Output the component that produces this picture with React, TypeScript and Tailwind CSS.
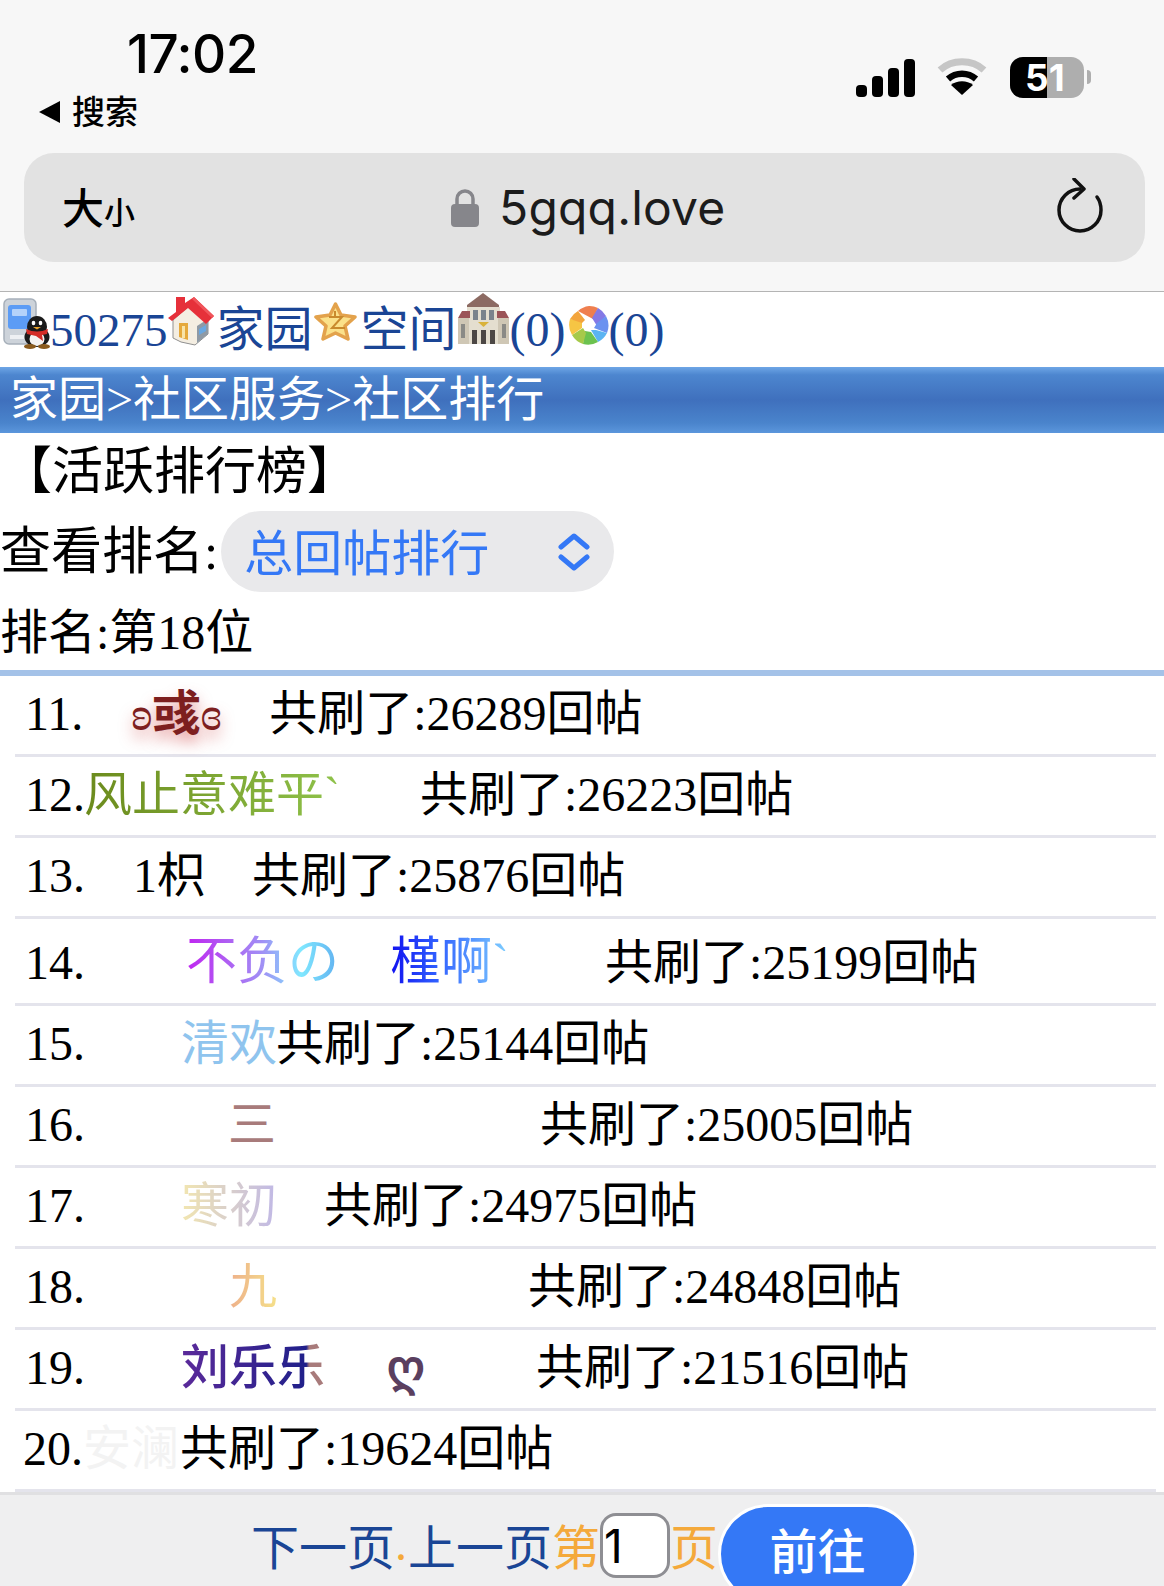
const serif = "font-['Liberation_Serif','Noto_Sans_CJK_SC',serif]";

// 手绘小图标
function PhoneQQ() {
  return (
    <svg className="inline align-baseline -mb-[3px] blur-[0.5px]" width="48" height="51" viewBox="0 0 48 51">
      <rect x="2" y="1" width="32" height="45" rx="5" fill="#cdd3da" stroke="#a7b0ba" strokeWidth="1.500" />
      <rect x="6" y="7" width="23" height="24" rx="3" fill="#5c9cf5" />
      <rect x="10" y="11" width="15" height="7" rx="1" fill="#b4d2fa" />
      <rect x="8" y="37" width="14" height="4" fill="#eef0f3" />
      <ellipse cx="35" cy="29" rx="10" ry="11" fill="#1b1b1b" />
      <ellipse cx="35" cy="39" rx="12.500" ry="10" fill="#1b1b1b" />
      <ellipse cx="35" cy="41" rx="7.500" ry="7" fill="#f4f2f0" />
      <path d="M24 31q11 5 22 0l-1 5-5 1 1 6-7-5-9-2z" fill="#d42c26" />
      <ellipse cx="31.500" cy="25" rx="1.800" ry="2.200" fill="#fff" />
      <ellipse cx="38.500" cy="25" rx="1.800" ry="2.200" fill="#fff" />
      <path d="M31 29h8l-4 2.500z" fill="#e8a32c" />
      <ellipse cx="28" cy="48.500" rx="6" ry="2.500" fill="#8a5a1c" />
      <ellipse cx="42" cy="48.500" rx="6" ry="2.500" fill="#8a5a1c" />
    </svg>
  );
}

function House() {
  return (
    <svg className="inline align-baseline blur-[0.5px]" width="46" height="50" viewBox="0 0 46 50">
      <path d="M5 24 22 9l18 15v14l-13 11-14-3-8-4z" fill="#f4eee2" stroke="#8f8f8f" />
      <path d="M29 30l11-7v15l-11 9z" fill="#8f9aa5" />
      <path d="M31 33l7-4v6l-7 4z" fill="#69a7e0" />
      <path d="M11 27h9v17l-9-3z" fill="#e5a93c" />
      <path d="M14 30h3v12h-3z" fill="#f8e4a8" />
      <path d="M0 22 8 16V1h9v6l9-6 20 19-8 8-18-16L4 25z" fill="#e6303a" />
      <path d="M26 1l20 19-2 2-20-19z" fill="#f0555b" />
    </svg>
  );
}

function Star() {
  return (
    <svg className="inline align-baseline mb-[5px] blur-[0.5px]" width="43" height="39" viewBox="0 0 43 39">
      <path d="M21.500 2 27 13l14 2-10 9 3 13-12.500-6L9 37l3-13L2 15l14-2z" fill="#fbe18a" stroke="#e3a24c" strokeWidth="3.500" strokeLinejoin="round" />
      <path d="M15 15h13l-10 11h13M21 9v6" fill="none" stroke="#c98a2d" strokeWidth="2" />
    </svg>
  );
}

function Building() {
  return (
    <svg className="inline align-baseline blur-[0.5px]" width="53" height="53" viewBox="0 0 53 53">
      <path d="M26 0 42 12v3H10v-3z" fill="#8c6a62" />
      <rect x="10" y="14" width="33" height="37" fill="#e4decf" />
      <path d="M1 25 5 18h8v7zM52 25l-4-7h-8v7z" fill="#9b5458" />
      <rect x="1" y="25" width="11" height="26" fill="#cfc7b5" />
      <rect x="41" y="25" width="11" height="26" fill="#cfc7b5" />
      <rect x="16" y="17" width="5" height="10" fill="#7a838c" />
      <rect x="24" y="17" width="5" height="10" fill="#7a838c" />
      <rect x="32" y="17" width="5" height="10" fill="#7a838c" />
      <rect x="15" y="37" width="5" height="14" fill="#4c4745" />
      <rect x="24" y="37" width="5" height="14" fill="#4c4745" />
      <rect x="33" y="37" width="5" height="14" fill="#4c4745" />
      <path d="M21 29h11l-5.500 5z" fill="#d9b23a" />
      <rect x="4" y="31" width="4" height="14" fill="#8a8a86" />
      <rect x="45" y="31" width="4" height="14" fill="#8a8a86" />
    </svg>
  );
}

function Aperture() {
  return (
    <svg className="inline align-baseline mb-[1px] blur-[0.4px]" width="40" height="39" viewBox="0 0 40 39">
      <path d="M20 0a20 20 0 0 1 9 2l-5 11-15-8a20 20 0 0 1 11-5z" fill="#ef7f4f" />
      <path d="M29 2a20 20 0 0 1 8 8l-9 10-5-8z" fill="#8479e6" />
      <path d="M37 10a20 20 0 0 1 1 17l-13-5 3-5z" fill="#6a92f0" />
      <path d="M38 27a20 20 0 0 1-9 9l-7-12h5z" fill="#5ab4f2" />
      <path d="M29 36a20 20 0 0 1-15 2l2-13 6 1z" fill="#6cc24f" />
      <path d="M14 38A20 20 0 0 1 3 29l11-7 3 5z" fill="#a6c94a" />
      <path d="M3 29A20 20 0 0 1 1 13l12 2 0 7z" fill="#f6c544" />
      <path d="M1 13a20 20 0 0 1 8-8l7 9-3 3z" fill="#f3a43c" />
    </svg>
  );
}

function Row({ no, name, tail, size = "h-[81px] pt-[10px]" }: { no: string; name: React.ReactNode; tail: React.ReactNode; size?: string }) {
  return (
    <div className={`${size} mx-[15px] flex w-[1141px] items-baseline whitespace-nowrap border-b-[3px] border-[#e4e4ec]`}>
      <span className={no === "20." ? "ml-[8px]" : "ml-[10px]"}>{no}</span>
      {name}
      <span>{tail}</span>
    </div>
  );
}

export default function App() {
  return (
    <div className={`relative h-[1586px] w-[1164px] overflow-hidden bg-white text-[48px] leading-[56px] text-black ${serif}`}>
      {/* 顶部状态栏和地址栏 */}
      <header className="h-[292px] border-b border-[#b4b4b4] bg-[#f7f7f7] font-['Inter','Noto_Sans_CJK_SC',sans-serif]">
        <div className="flex h-[153px] justify-between">
          <div className="pl-[39px]">
            <div className="ml-[88px] mt-[26px] text-[53px] leading-[56px] font-medium tracking-[-0.5px]">17:02</div>
            <div className="mt-[10px] flex items-center gap-[12px] text-[33px] leading-[40px] font-medium">
              <span className="h-0 w-0 border-y-[11px] border-r-[21px] border-y-transparent border-r-black" />
              <span>搜索</span>
            </div>
          </div>
          <div className="mr-[73px] mt-[57px] flex h-[42px] items-start">
            <svg className="mr-[21px] mt-[2px]" width="60" height="38" viewBox="0 0 60 38" fill="#000">
              <rect x="0" y="26" width="11" height="12" rx="4" />
              <rect x="16" y="17" width="11" height="21" rx="4" />
              <rect x="32" y="9" width="11" height="29" rx="4" />
              <rect x="48" y="0" width="11" height="38" rx="4" />
            </svg>
            <svg className="mr-[23px] mt-[1px]" width="50" height="38" viewBox="0 0 50 38" fill="none">
              <path d="M3 12C15 1 35 1 47 12" stroke="#c6c6c6" strokeWidth="7" />
              <path d="M11 21c8-7 20-7 28 0" stroke="#000" strokeWidth="6.500" />
              <path d="M25 37 14 27c6-5 16-5 22 0z" fill="#000" />
            </svg>
            <div className="relative flex h-[41px] w-[74px] rounded-[13px] bg-[#aeaeae]">
              <div className="h-full w-[37px] rounded-l-[13px] bg-black" />
              <span className="absolute left-[15px] top-0 text-[37px] leading-[41px] font-bold text-white">51</span>
            </div>
            <span className="ml-[3px] mt-[13px] h-[14px] w-[4px] rounded-r-full bg-[#aeaeae]" />
          </div>
        </div>
        <div className="mx-[24px] flex h-[109px] w-[1121px] items-center rounded-[30px] bg-[#e2e2e2] pl-[38px] pr-[42px]">
          <div className="flex w-[389px] items-baseline pt-[6px] font-medium">
            <span className="text-[42px]">大</span>
            <span className="text-[31px]">小</span>
          </div>
          <svg width="28" height="38" viewBox="0 0 28 38">
            <path d="M6 17v-7a8 8 0 0 1 16 0v7" fill="none" stroke="#86868b" strokeWidth="3.500" />
            <rect x="0" y="15" width="28" height="23" rx="4" fill="#86868b" />
          </svg>
          <span className="ml-[20px] text-[48px] leading-[56px] tracking-[0.2px] text-[#1c1c1c]">5gqq.love</span>
          <svg className="ml-auto -mt-[4px]" width="46" height="56" viewBox="0 0 46 56" fill="none" stroke="#111" strokeWidth="3.500" strokeLinecap="round" strokeLinejoin="round">
            <path d="M23 11a21 21 0 1 0 21 21c0-5-1-9-4-13" />
            <path d="M17 1l10 10-10 9" />
          </svg>
        </div>
      </header>

      {/* 快捷链接 */}
      <div className="h-[75px] whitespace-nowrap pl-[2px] pt-[1px] leading-[52px] text-[#1a4595]">
        <PhoneQQ />
        <span className="text-[47px]">50275</span>
        <House />
        <span className="ml-[3px]">家园</span>
        <span className="ml-[1px]"><Star /></span>
        <span className="ml-[4px]">空间</span>
        <Building />
        <span>(0)</span>
        <span className="ml-[3px]"><Aperture /></span>
        <span>(0)</span>
      </div>

      <div className="h-[66px] whitespace-nowrap bg-[linear-gradient(#6ea6e6,#4d86cf_12%,#3f70bd_50%,#4a84cc_85%,#5b96dc)] pl-[10px] leading-[66px] text-white">
        家园&gt;社区服务&gt;社区排行
      </div>

      <div className="h-[78px] whitespace-nowrap pl-[1px] pt-[11px] text-[51px]">【活跃排行榜】</div>
      <div className="flex h-[81px] items-center whitespace-nowrap">
        <span className="text-[51px]">查看排名:</span>
        <div className="ml-[3px] flex h-[81px] w-[393px] items-center rounded-full bg-[#e9e9eb] pl-[23px] pt-[6px] text-[49px] text-[#3478f6]">
          <span>总回帖排行</span>
          <svg className="ml-[69px] -mt-[6px]" width="32" height="38" viewBox="0 0 32 38" fill="none" stroke="#3478f6" strokeWidth="5" strokeLinecap="round" strokeLinejoin="round">
            <path d="M3 14 16 3l13 11" />
            <path d="M3 24l13 11 13-11" />
          </svg>
        </div>
      </div>
      <div className="h-[78px] whitespace-nowrap pt-[13px]">排名:第18位</div>

      <div className="h-[6px] bg-[#a4c2e8]" />

      {/* 排行列表 */}
      <div>
        <Row
          no="11."
          name={
            <span className="ml-[48px] w-[138px] font-medium text-[#7d1f1f] [text-shadow:0_8px_14px_rgba(205,60,60,0.5)]">
              ʚ<b>彧</b>ɞ
            </span>
          }
          tail="共刷了:26289回帖"
        />
        <Row
          no="12."
          name={<span className="-ml-[1px] w-[336px]"><span className="bg-[linear-gradient(90deg,#6b8a1c,#8fc24a)] bg-clip-text text-transparent">风止意难平ˋ</span></span>}
          tail="共刷了:26223回帖"
        />
        <Row no="13." name={<span className="ml-[48px] w-[119px]">1枳</span>} tail="共刷了:25876回帖" />
        <Row
          no="14."
          size="h-[87px] pt-[15px]"
          name={
            <span className="ml-[101px] flex w-[419px] text-[51px]">
              <span className="w-[204px]"><span className="bg-[linear-gradient(90deg,#c024f0,#a090f5_50%,#80e8ff_75%,#60b0f0)] bg-clip-text text-transparent">不负の</span></span>
              <span className="bg-[linear-gradient(90deg,#1010f0,#3060ff_40%,#80d0ff)] bg-clip-text text-transparent">槿啊ˋ</span>
            </span>
          }
          tail="共刷了:25199回帖"
        />
        <Row
          no="15."
          name={<span className="ml-[96px] w-[95px] text-[#8fc4ee]">清欢</span>}
          tail="共刷了:25144回帖"
        />
        <Row no="16." name={<span className="ml-[143px] w-[312px] text-[#a87b7b]">三</span>} tail="共刷了:25005回帖" />
        <Row
          no="17."
          name={<span className="ml-[96px] w-[143px]"><span className="bg-[linear-gradient(90deg,#f2e6b0,#c0b8e6)] bg-clip-text text-transparent">寒初</span></span>}
          tail="共刷了:24975回帖"
        />
        <Row
          no="18."
          name={<span className="ml-[144px] w-[299px]"><span className="bg-[linear-gradient(90deg,#eeb08a,#f5e08a)] bg-clip-text text-transparent">九</span></span>}
          tail="共刷了:24848回帖"
        />
        <Row
          no="19."
          name={
            <span className="ml-[96px] flex w-[355px] font-medium">
              <span className="w-[206px]"><span className="bg-[linear-gradient(90deg,#5b2a9a,#20208a_87%,#a87b7b_89%)] bg-clip-text text-transparent">刘乐乐</span></span>
              <b className="text-[#5a3f5f]">ღ</b>
            </span>
          }
          tail="共刷了:21516回帖"
        />
        <Row no="20." name={<span className="w-[97px] text-[#f3f3f3]">安澜</span>} tail="共刷了:19624回帖" />
      </div>

      {/* 底部翻页 */}
      <footer className="absolute inset-x-0 bottom-0 flex h-[94px] items-start whitespace-nowrap border-t-[3px] border-[#e0e0e2] bg-[#efeff0] pl-[251px] font-['Noto_Sans_CJK_SC',sans-serif] text-[#1a4595]">
        <span className="mt-[21px]">下一页</span>
        <span className="mt-[21px] w-[13px] font-['Liberation_Serif',serif] text-[#f4a93b]">.</span>
        <span className="mt-[21px]">上一页</span>
        <span className="mt-[21px] text-[#f4a93b]">第</span>
        <div className="mt-[18px] flex h-[65px] w-[70px] items-center rounded-[16px] border-[3px] border-[#8e8e93] bg-white pl-[1px] font-['Inter',sans-serif] text-[46px] text-black">1</div>
        <span className="mt-[21px] text-[#f4a93b]">页</span>
        <div className="mt-[9px] flex h-[100px] w-[199px] justify-center rounded-[50px] border-[3px] border-white bg-[#3478f6] pt-[13px] font-medium text-white">前往</div>
      </footer>
    </div>
  );
}
